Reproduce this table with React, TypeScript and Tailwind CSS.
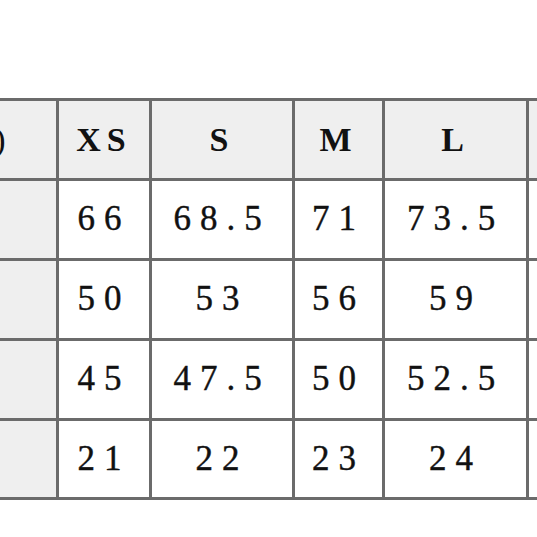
import React from 'react';

// サイズ表（左右は画面外にはみ出している）
const sizes = ['XS', 'S', 'M', 'L', 'XL'];

const rows: { label: string; values: string[] }[] = [
  { label: '着丈', values: ['66', '68.5', '71', '73.5', '76'] },
  { label: '身幅', values: ['50', '53', '56', '59', '62'] },
  { label: '肩幅', values: ['45', '47.5', '50', '52.5', '55'] },
  { label: '袖丈', values: ['21', '22', '23', '24', '25'] },
];

const rowHeights = ['h-[77px]', 'h-[77px]', 'h-[77px]', 'h-[77px]', 'h-[76px]', 'h-[76px]'];

const App: React.FC = () => {
  return (
    <div className="w-[537px] h-[537px] overflow-hidden bg-white pt-[98px] font-['Liberation_Serif','Noto_Sans_CJK_JP',serif] text-[#111]">
      <div className="ml-[-147px] w-max grid grid-cols-[200px_90px_140px_87px_141px_141px] gap-[3px] p-[3px] bg-[#6b6b6b]">
        {/* ヘッダー */}
        <div className={`${rowHeights[0]} bg-[#efefef] flex items-center justify-center pr-[66px] text-[34px] whitespace-nowrap`}>
          サイズ(cm)
        </div>
        {sizes.map((s) => (
          <div
            key={s}
            className={`${rowHeights[0]} bg-[#efefef] flex items-center justify-center text-[34px] font-bold tracking-[6px]`}
          >
            {s}
          </div>
        ))}

        {/* 本体 */}
        {rows.map((row, i) => (
          <React.Fragment key={row.label}>
            <div className={`${rowHeights[i + 1]} bg-[#efefef] flex items-center justify-center pr-[66px] text-[34px]`}>
              {row.label}
            </div>
            {row.values.map((v, j) => (
              <div
                key={j}
                className={`${rowHeights[i + 1]} bg-white flex items-center justify-center text-[35px] tracking-[9px] [-webkit-text-stroke:0.4px_#111]`}
              >
                {v}
              </div>
            ))}
          </React.Fragment>
        ))}
      </div>
    </div>
  );
};

export default App;
